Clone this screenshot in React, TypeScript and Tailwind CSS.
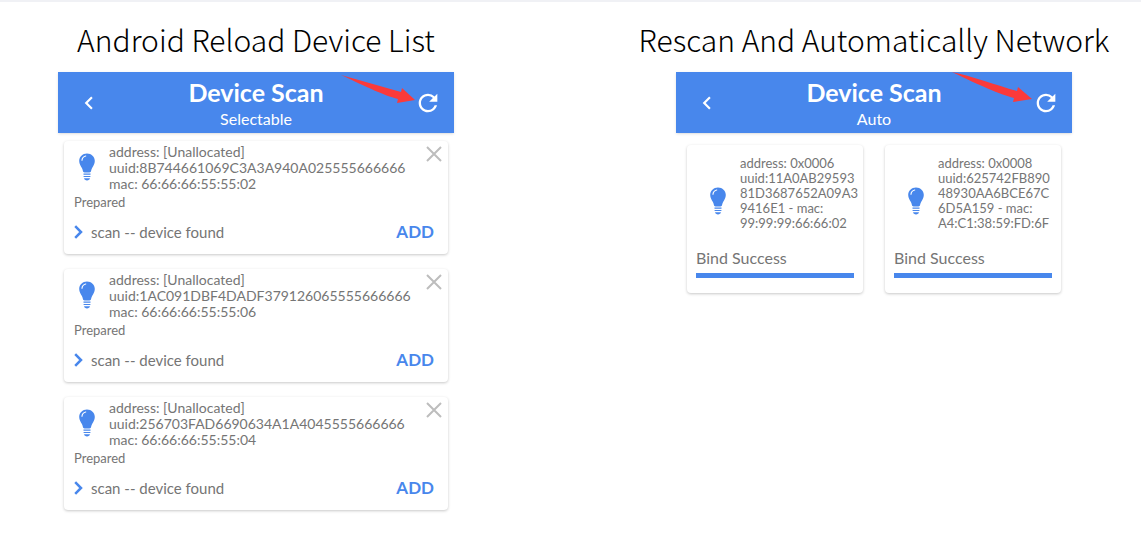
import { MdRefresh, MdChevronLeft } from "react-icons/md"

const selectable = [
  { uuid: "8B744661069C3A3A940A025555666666", mac: "66:66:66:55:55:02" },
  { uuid: "1AC091DBF4DADF379126065555666666", mac: "66:66:66:55:55:06" },
  { uuid: "256703FAD6690634A1A4045555666666", mac: "66:66:66:55:55:04" },
]

const bound = [
  ["address: 0x0006", "uuid:11A0AB29593", "81D3687652A09A3", "9416E1 - mac:", "99:99:99:66:66:02"],
  ["address: 0x0008", "uuid:625742FB890", "48930AA6BCE67C", "6D5A159 - mac:", "A4:C1:38:59:FD:6F"],
]

// pointers to the rescan button, one per panel
const arrows = {
  short: "M8 3L68 20l1-4 13 12-18 3 1-4C50 23 36 16 8 3z",
  long: "M1 0C20 4 45 13 66 19l1-4 14 12-19 3 1-4C48 22 30 14 1 0z",
}

function Bulb() {
  return (
    <svg viewBox="0 0 16 28" className="h-7 w-4 shrink-0" aria-hidden="true">
      <path
        d="M8 0.5C3.6 0.5 0.2 3.8 0.2 8c0 3 1.5 4.8 2.7 7 .9 1.6 1 3.5 1.5 4.1.3.3.7.4 1.200.4h4.800c.5 0 .9-.1 1.200-.4.5-.6.6-2.500 1.500-4.100 1.200-2.200 2.700-4 2.700-7C15.800 3.800 12.400.5 8 .5z"
        fill="#4887ec"
      />
      <path d="M3 7.200C3.200 5 4.600 3.500 6.700 3" fill="none" stroke="#fff" strokeWidth="1.200" strokeLinecap="round" />
      <path d="M4.500 21.200h7M4.600 23.500h6.800" stroke="#4887ec" strokeWidth="1.200" />
      <path d="M5 25.200h6c-.3 1.400-1.500 2.200-3 2.200s-2.700-.8-3-2.200z" fill="#4887ec" />
    </svg>
  )
}

function Header({ subtitle, arrow }: { subtitle: string; arrow: keyof typeof arrows }) {
  return (
    <header className="relative flex items-center justify-between bg-[#4887ec] pt-[5px] pr-3 pb-[2px] pl-[18px] text-white shadow-sm">
      <button type="button" aria-label="Back" className="pb-[3px]">
        <MdChevronLeft size={26} />
      </button>
      <div className="-ml-1 text-center">
        <h2 className="text-[25px] leading-[30px] font-bold">Device Scan</h2>
        <p className="text-[16px] leading-6">{subtitle}</p>
      </div>
      <button type="button" aria-label="Rescan" className="pb-[3px]">
        <MdRefresh size={28} />
      </button>
      <svg viewBox="0 0 83 33" className="absolute top-0 right-[38px] h-[33px] w-[83px]" aria-hidden="true">
        <path d={arrows[arrow]} fill="#fb3a3a" />
      </svg>
    </header>
  )
}

function SelectableCard({ uuid, mac }: { uuid: string; mac: string }) {
  return (
    <li className="rounded bg-white pt-[3px] pr-[14px] pb-[10px] pl-[10px] shadow-[0_1px_3px_rgba(0,0,0,0.22)]">
      <div className="flex items-start">
        <div className="w-[35px] pt-[9px] pl-[5px]">
          <Bulb />
        </div>
        <div className="flex-1 text-[14px] leading-4">
          <p>address: [Unallocated]</p>
          <p>uuid:{uuid}</p>
          <p>mac: {mac}</p>
        </div>
        <button type="button" aria-label="Remove" className="-mr-2 pt-[2px]">
          <svg viewBox="0 0 16 16" className="h-4 w-4" aria-hidden="true">
            <path d="M1 1l14 14M15 1L1 15" stroke="#bdbdbd" strokeWidth="2" />
          </svg>
        </button>
      </div>
      <p className="text-[13px] leading-5">Prepared</p>
      <div className="mt-2 flex items-center text-[15px] leading-6">
        <svg viewBox="0 0 9 14" className="mr-2 h-[14px] w-[9px]" aria-hidden="true">
          <path d="M1.200 1.200L7 7l-5.800 5.800" fill="none" stroke="#4887ec" strokeWidth="2.500" />
        </svg>
        <p className="flex-1">scan -- device found</p>
        <button type="button" className="text-[17px] font-bold text-[#4887ec]">
          ADD
        </button>
      </div>
    </li>
  )
}

function BoundCard({ lines }: { lines: string[] }) {
  return (
    <li className="rounded bg-white px-[9px] pt-[11px] pb-[15px] shadow-[0_1px_3px_rgba(0,0,0,0.22)]">
      <div className="flex items-center">
        <div className="w-11 shrink-0 pt-[14px] pl-[14px]">
          <Bulb />
        </div>
        <div className="text-[13px] leading-[15px] whitespace-nowrap">
          {lines.map((line) => (
            <p key={line}>{line}</p>
          ))}
        </div>
      </div>
      <p className="mt-[15px] text-[16px] leading-6">Bind Success</p>
      <div className="mt-[3px] h-[5px] bg-[#4887ec]" />
    </li>
  )
}

function PanelTitle({ children }: { children: string }) {
  return (
    <h1 className="flex h-[72px] items-center justify-center pt-[6px] font-['Noto_Sans_CJK_SC',sans-serif] text-[30px] font-light whitespace-nowrap text-black">
      {children}
    </h1>
  )
}

export default function App() {
  return (
    <main className="grid grid-cols-2 gap-[222px] bg-white pr-[69px] pl-[58px] pb-5 font-['Lato','Noto_Sans',sans-serif] text-[#757575] shadow-[inset_0_2px_0_#f0f1f5]">
      <section>
        <PanelTitle>Android Reload Device List</PanelTitle>
        <Header subtitle="Selectable" arrow="short" />
        <ul className="flex flex-col gap-[15px] px-[6px] pt-2">
          {selectable.map((d) => (
            <SelectableCard key={d.uuid} {...d} />
          ))}
        </ul>
      </section>
      <section>
        <PanelTitle>Rescan And Automatically Network</PanelTitle>
        <Header subtitle="Auto" arrow="long" />
        <ul className="grid grid-cols-2 gap-[22px] px-[11px] pt-3">
          {bound.map((lines) => (
            <BoundCard key={lines[1]} lines={lines} />
          ))}
        </ul>
      </section>
    </main>
  )
}
